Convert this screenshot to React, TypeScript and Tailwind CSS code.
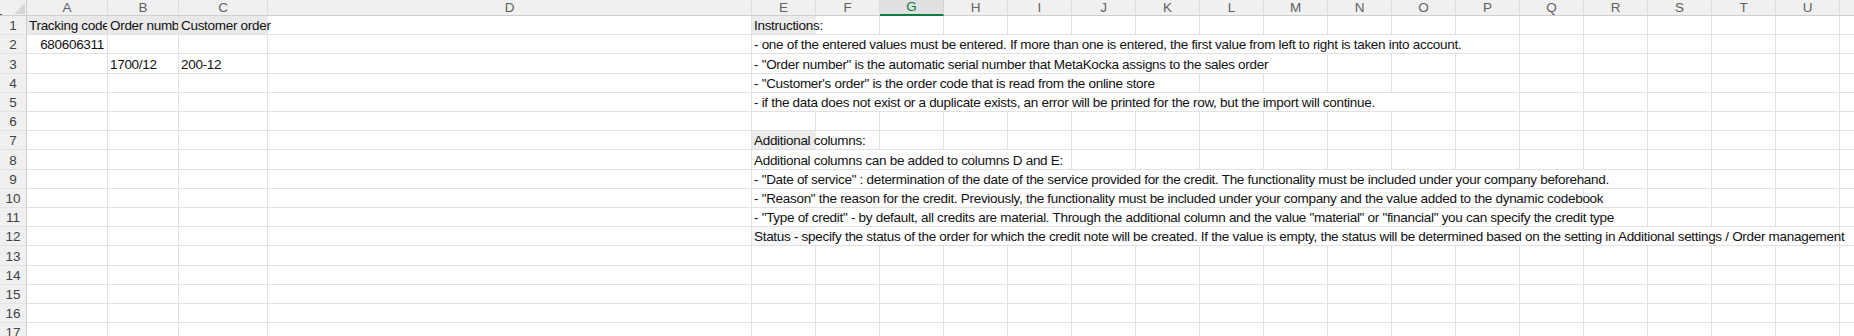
import React from "react";

type Cell = {
  text: string;
  align?: "left" | "right";
  fill?: string;
  spanTo?: number;
};

const LETTERS = "ABCDEFGHIJKLMNOPQRSTUV".split("");
const WIDTHS = [81, 71, 89, 484, 64, 64, 64, 64, 64, 64, 64, 64, 64, 64, 64, 64, 64, 64, 64, 64, 64, 64];
const ROW_HEIGHTS = [19, 19, 20, 19, 19, 19, 19, 20, 19, 19, 19, 19, 20, 19, 19, 19, 19];

const DATA: Record<number, Record<number, Cell>> = {
  1: {
    0: { text: "Tracking code", fill: "bg-[#e9e9e9]" },
    1: { text: "Order number", fill: "bg-[#e9e9e9]" },
    2: { text: "Customer order", fill: "bg-[#e9e9e9]", spanTo: 3 },
    4: { text: "Instructions:", fill: "bg-[#ececec]", spanTo: 5 },
  },
  2: {
    0: { text: "680606311", align: "right" },
    4: {
      text: "- one of the entered values must be entered. If more than one is entered, the first value from left to right is taken into account.",
      spanTo: 15,
    },
  },
  3: {
    1: { text: "1700/12" },
    2: { text: "200-12" },
    4: {
      text: '- "Order number" is the automatic serial number that MetaKocka assigns to the sales order',
      spanTo: 12,
    },
  },
  4: {
    4: { text: '- "Customer\'s order" is the order code that is read from the online store', spanTo: 10 },
  },
  5: {
    4: {
      text: "- if the data does not exist or a duplicate exists, an error will be printed for the row, but the import will continue.",
      spanTo: 14,
    },
  },
  7: {
    4: { text: "Additional columns:", fill: "bg-[#ececec]", spanTo: 5 },
  },
  8: {
    4: { text: "Additional columns can be added to columns D and E:", spanTo: 8 },
  },
  9: {
    4: {
      text: '- "Date of service" : determination of the date of the service provided for the credit. The functionality must be included under your company beforehand.',
      spanTo: 17,
    },
  },
  10: {
    4: {
      text: '- "Reason" the reason for the credit. Previously, the functionality must be included under your company and the value added to the dynamic codebook',
      spanTo: 16,
    },
  },
  11: {
    4: {
      text: '- "Type of credit" - by default, all credits are material. Through the additional column and the value "material" or "financial" you can specify the credit type',
      spanTo: 17,
    },
  },
  12: {
    4: {
      text: "Status - specify the status of the order for which the credit note will be created. If the value is empty, the status will be determined based on the setting in Additional settings / Order management",
      fill: "bg-[#f5f7f9]",
      spanTo: 20,
    },
  },
};

function Row({ r, h }: { r: number; h: number }) {
  const cells = DATA[r] || {};
  const hideRight = new Set<number>();
  Object.entries(cells).forEach(([k, c]) => {
    const start = Number(k);
    if (c.spanTo !== undefined) {
      for (let i = start; i < c.spanTo; i++) hideRight.add(i);
    }
  });
  return (
    <div className="flex shrink-0" style={{ height: h }}>
      <div className="w-[27px] shrink-0 flex items-end justify-center bg-[#f0f0f0] border-r border-r-[#cfcfcf] border-b border-b-[#e3e3e3] text-[13.5px] leading-[17px] text-[#424242]">
        {r}
      </div>
      {WIDTHS.map((w, i) => {
        const c = cells[i];
        const spans = c && c.spanTo !== undefined;
        return (
          <div
            key={i}
            className={`shrink-0 relative flex items-end border-b border-b-[#e1e1e1] ${
              hideRight.has(i) ? "" : "border-r border-r-[#e1e1e1]"
            } ${c && c.fill ? c.fill : ""} ${c && c.align === "right" ? "justify-end" : ""} ${
              spans ? "overflow-visible" : "overflow-hidden"
            }`}
            style={{ width: w }}
          >
            {c && (
              <span
                className={`relative z-10 whitespace-nowrap text-[13.5px] tracking-[-0.3px] leading-[17px] text-[#111111] ${
                  c.align === "right" ? "pr-[3px]" : "pl-[2px]"
                }`}
              >
                {c.text}
              </span>
            )}
          </div>
        );
      })}
    </div>
  );
}

export default function App() {
  return (
    <div className="w-[1854px] h-[336px] overflow-hidden bg-white font-['Liberation_Sans',Arial,sans-serif] flex flex-col">
      <div className="flex shrink-0 h-[16px]">
        <div className="w-[27px] shrink-0 relative bg-[#f0f0f0] border-r border-r-[#cfcfcf] border-b border-b-[#cfcfcf]">
          <div className="absolute right-[1px] bottom-[1px] w-0 h-0 border-l-[11px] border-l-transparent border-b-[11px] border-b-[#d6d6d6]" />
          <div className="absolute left-0 top-[14px] w-[2px] h-[1px] bg-[#555555]" />
        </div>
        {WIDTHS.map((w, i) => {
          const sel = LETTERS[i] === "G";
          return (
            <div
              key={i}
              className={`shrink-0 flex items-center justify-center text-[13.5px] leading-[16px] ${
                sel
                  ? "bg-[#e0e0e0] text-[#107c41] border-b-2 border-b-[#107c41] border-r border-r-[#d4d4d4]"
                  : "bg-[#f0f0f0] text-[#616161] border-b border-b-[#cfcfcf] border-r border-r-[#dcdcdc]"
              }`}
              style={{ width: w }}
            >
              {LETTERS[i]}
            </div>
          );
        })}
      </div>
      {ROW_HEIGHTS.map((h, idx) => (
        <Row key={idx} r={idx + 1} h={h} />
      ))}
    </div>
  );
}
